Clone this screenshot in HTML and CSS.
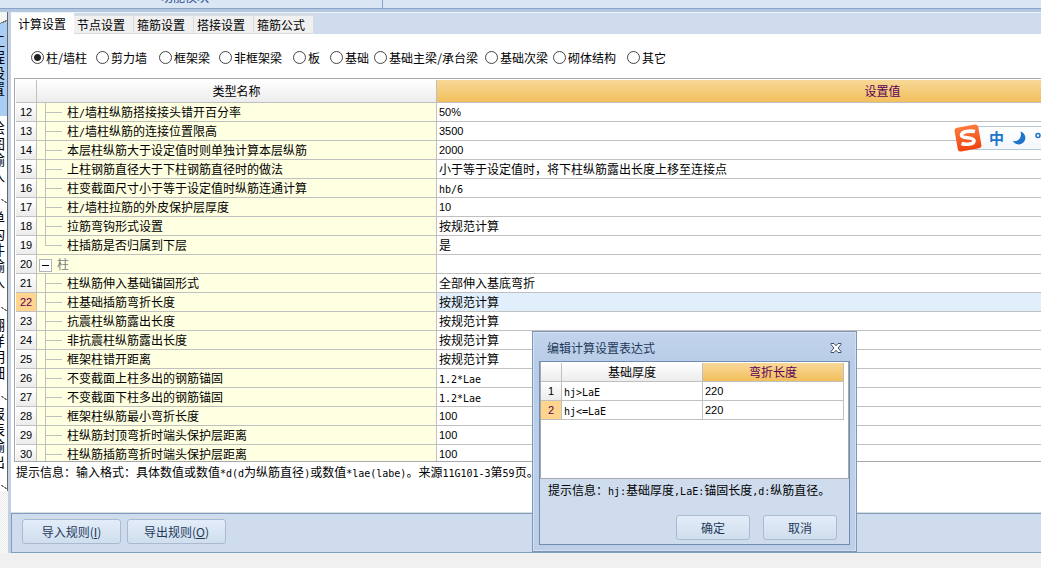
FILE: index.html
```html
<!DOCTYPE html>
<html lang="zh-CN">
<head>
<meta charset="utf-8">
<title>计算设置</title>
<link rel="stylesheet" href="styles.css">
</head>
<body>
<div class="app">
  <header class="ribbon">
    <div class="ribbon-group"><span>功能模块</span></div>
  </header>
  <div class="workspace">
    <nav class="side">
      <button class="side-tab side-active"><span>工程设置</span></button>
      <button class="side-tab"><span>绘图输入</span></button>
      <button class="side-tab side-long"><span>单构件输入</span></button>
      <button class="side-tab"><span>翻样明细</span></button>
      <button class="side-tab"><span>报表输出</span></button>
    </nav>
    <main class="panel">
      <div class="tabs">
        <button class="tab tab-active">计算设置</button>
        <button class="tab">节点设置</button>
        <button class="tab">箍筋设置</button>
        <button class="tab">搭接设置</button>
        <button class="tab">箍筋公式</button>
      </div>
      <div class="kinds">
        <label><input type="radio" name="kind" checked>柱<span class="slash">/</span>墙柱</label>
        <label><input type="radio" name="kind">剪力墙</label>
        <label><input type="radio" name="kind">框架梁</label>
        <label><input type="radio" name="kind">非框架梁</label>
        <label><input type="radio" name="kind">板</label>
        <label><input type="radio" name="kind">基础</label>
        <label><input type="radio" name="kind">基础主梁<span class="slash">/</span>承台梁</label>
        <label><input type="radio" name="kind">基础次梁</label>
        <label><input type="radio" name="kind">砌体结构</label>
        <label><input type="radio" name="kind">其它</label>
      </div>
      <div class="grid-box">
        <table class="grid main-grid">
          <colgroup><col class="c-num"><col class="c-name"><col class="c-value"></colgroup>
          <thead><tr><th></th><th>类型名称</th><th class="picked">设置值</th></tr></thead>
          <tbody>
            <tr><th>12</th><td><i class="twig"></i>柱<span class="code">/</span>墙柱纵筋搭接接头错开百分率</td><td class="num">50%</td></tr>
            <tr><th>13</th><td><i class="twig"></i>柱<span class="code">/</span>墙柱纵筋的连接位置限高</td><td class="num">3500</td></tr>
            <tr><th>14</th><td><i class="twig"></i>本层柱纵筋大于设定值时则单独计算本层纵筋</td><td class="num">2000</td></tr>
            <tr><th>15</th><td><i class="twig"></i>上柱钢筋直径大于下柱钢筋直径时的做法</td><td>小于等于设定值时，将下柱纵筋露出长度上移至连接点</td></tr>
            <tr><th>16</th><td><i class="twig"></i>柱变截面尺寸小于等于设定值时纵筋连通计算</td><td><span class="code">hb/6</span></td></tr>
            <tr><th>17</th><td><i class="twig"></i>柱<span class="code">/</span>墙柱拉筋的外皮保护层厚度</td><td class="num">10</td></tr>
            <tr><th>18</th><td><i class="twig"></i>拉筋弯钩形式设置</td><td>按规范计算</td></tr>
            <tr><th>19</th><td><i class="twig twig-last"></i>柱插筋是否归属到下层</td><td>是</td></tr>
            <tr class="group"><th>20</th><td><button class="fold" aria-label="折叠"></button>柱</td><td></td></tr>
            <tr><th>21</th><td><i class="twig"></i>柱纵筋伸入基础锚固形式</td><td>全部伸入基底弯折</td></tr>
            <tr class="current"><th>22</th><td><i class="twig"></i>柱基础插筋弯折长度</td><td>按规范计算</td></tr>
            <tr><th>23</th><td><i class="twig"></i>抗震柱纵筋露出长度</td><td>按规范计算</td></tr>
            <tr><th>24</th><td><i class="twig"></i>非抗震柱纵筋露出长度</td><td>按规范计算</td></tr>
            <tr><th>25</th><td><i class="twig"></i>框架柱错开距离</td><td>按规范计算</td></tr>
            <tr><th>26</th><td><i class="twig"></i>不变截面上柱多出的钢筋锚固</td><td><span class="code">1.2*Lae</span></td></tr>
            <tr><th>27</th><td><i class="twig"></i>不变截面下柱多出的钢筋锚固</td><td><span class="code">1.2*Lae</span></td></tr>
            <tr><th>28</th><td><i class="twig"></i>框架柱纵筋最小弯折长度</td><td class="num">100</td></tr>
            <tr><th>29</th><td><i class="twig"></i>柱纵筋封顶弯折时端头保护层距离</td><td class="num">100</td></tr>
            <tr><th>30</th><td><i class="twig"></i>柱纵筋插筋弯折时端头保护层距离</td><td class="num">100</td></tr>
          </tbody>
        </table>
      </div>
      <p class="hint">提示信息：输入格式：具体数值或数值<span class="code">*d(d</span>为纵筋直径<span class="code">)</span>或数值<span class="code">*lae(labe)</span>。来源<span class="code">11G101-3</span>第<span class="code">59</span>页。</p>
      <div class="actions">
        <button class="btn btn-wide">导入规则(<u>I</u>)</button>
        <button class="btn btn-wide">导出规则(<u>O</u>)</button>
      </div>
    </main>
  </div>
  <footer class="status"></footer>

  <div class="ime">
    <svg class="ime-logo" viewBox="0 0 30 30" width="30" height="30">
      <defs><linearGradient id="s-fill" x1="0" y1="0" x2="0" y2="1"><stop offset="0" stop-color="#fb7a3c"/><stop offset="1" stop-color="#f0440f"/></linearGradient></defs>
      <rect x="3" y="3" width="24" height="24" rx="3" fill="url(#s-fill)" transform="rotate(-10 15 15)"/>
      <path d="M22 8.500C17 7.500 8.500 8.500 8.500 12.200C8.500 16 21 13.500 21 17.700C21 21.500 13 22 8.500 20.500" fill="none" stroke="#fff" stroke-width="3.600"/>
    </svg>
    <span class="ime-mode">中</span>
    <svg viewBox="0 0 14 14" width="14" height="14"><path d="M8.500 0.500C13 2 14.500 6.500 12.500 10C10 14.500 3.500 14.500 0.500 10C5.500 11.500 10.500 7 8.500 0.500Z" fill="#1e74c8"/></svg>
    <svg viewBox="0 0 8 14" width="8" height="14"><circle cx="4" cy="4.500" r="2" fill="none" stroke="#1e74c8" stroke-width="1.500"/></svg>
  </div>

  <section class="dialog" role="dialog" aria-labelledby="dialog-title">
    <div class="dialog-head">
      <h2 id="dialog-title">编辑计算设置表达式</h2>
      <button class="close" aria-label="关闭">
        <svg viewBox="0 0 12 10" width="12" height="10"><path d="M1 0.500H4L6 2.800L8 0.500H11V1.500L8 5L11 8.500V9.500H8L6 7.200L4 9.500H1V8.500L4 5L1 1.500Z" fill="#fff" stroke="#3c4c66"/></svg>
      </button>
    </div>
    <div class="dialog-body">
      <div class="dialog-list">
        <table class="grid">
          <colgroup><col class="d-num"><col class="d-col"><col class="d-col"></colgroup>
          <thead><tr><th></th><th>基础厚度</th><th class="picked">弯折长度</th></tr></thead>
          <tbody>
            <tr><th>1</th><td><span class="code">hj&gt;LaE</span></td><td class="num">220</td></tr>
            <tr class="current"><th>2</th><td><span class="code">hj&lt;=LaE</span></td><td class="num">220</td></tr>
          </tbody>
        </table>
      </div>
      <p class="dialog-hint">提示信息：<span class="code">hj:</span>基础厚度<span class="code">,LaE:</span>锚固长度<span class="code">,d:</span>纵筋直径。</p>
      <div class="dialog-actions">
        <button class="btn">确定</button>
        <button class="btn">取消</button>
      </div>
    </div>
  </section>
</div>
</body>
</html>
```
FILE: styles.css
```css
* { box-sizing: border-box; }

body {
  margin: 0;
  overflow: hidden;
  color: #000;
  background: #f0f0f0;
  font: 12px/18px "Noto Sans CJK SC", "Liberation Sans", sans-serif;
}

button {
  margin: 0;
  padding: 0;
  border: 0;
  color: inherit;
  font: inherit;
}

p, h2 { margin: 0; font-size: 12px; font-weight: normal; }

.code { font-family: "DejaVu Sans Mono", monospace; font-size: 10px; line-height: 10px; }
.num { font-family: "Liberation Sans", sans-serif; font-size: 11px; }

.app {
  position: relative;
  display: flex;
  flex-direction: column;
  height: 100vh;
}

/* ribbon */
.ribbon {
  flex: none;
  height: 12px;
  overflow: hidden;
  background: #dbe6f4;
  border-bottom: 3px solid #b3c8de;
  box-shadow: inset 0 -1px #8aa3c8;
}
.ribbon-group {
  display: flex;
  align-items: flex-end;
  justify-content: center;
  width: 383px;
  height: 8px;
  padding: 0 12px 3px 0;
  color: #1e4a8a;
  border-right: 1px solid #8aa3c8;
  line-height: 16px;
}

.workspace { flex: 1; display: flex; min-height: 0; }

/* left module tabs */
.side {
  flex: none;
  width: 11px;
  overflow: hidden;
  background: repeating-conic-gradient(#fff 0 25%, #e9e9e9 0 50%) 0 0 / 2px 2px;
  border-right: 3px solid #c3d0e2;
}
.side-tab {
  display: flex;
  justify-content: flex-end;
  align-items: center;
  width: 8px;
  height: 89px;
  padding: 0 2px 20px 0;
  background: linear-gradient(32deg, transparent 5px, #777 5px, #777 6px, transparent 6px) 0 100% / 8px 6px no-repeat, #fff;
  border-right: 1px solid #666;
}
.side-tab span {
  flex: none;
  width: 14px;
  font-size: 14px;
  line-height: 16px;
  white-space: normal;
  word-break: break-all;
}
.side-active {
  height: 104px;
  padding-bottom: 0;
  background: linear-gradient(155deg, #f4f4f4 10px, #777 10px, #777 11px, #a9cdf3 11px);
}
.side-long { height: 108px; }

/* main panel */
.panel {
  flex: 1;
  display: flex;
  flex-direction: column;
  min-width: 0;
  background: #fff;
}
.tabs {
  flex: none;
  display: flex;
  align-items: flex-end;
  height: 22px;
  background: #cfdcee;
  border-top: 1px solid #eef3f9;
}
.tab {
  width: 60px;
  height: 19px;
  padding-right: 5px;
  background: #f0f0f0;
  border: solid #dcdcdc;
  border-width: 1px 1px 1px 0;
  line-height: 18px;
}
.tab-active {
  width: 63px;
  height: 21px;
  padding-right: 0;
  background: #fff;
  border-color: #fff;
}

.kinds {
  flex: none;
  display: grid;
  grid-template-columns: 65px 63px 60px 74px 37px 44px 111px 68px 74px 44px;
  height: 44px;
  padding: 3px 0 0 20px;
}
.kinds label {
  display: flex;
  align-items: center;
  white-space: nowrap;
}
.slash { width: 5px; text-align: center; }
.kinds input {
  appearance: none;
  flex: none;
  width: 13px;
  height: 13px;
  margin: 0 2px 0 0;
  border: 1px solid #444;
  border-radius: 50%;
  background: #fff;
}
.kinds input:checked { background: radial-gradient(circle, #222 3px, #fff 4px); }

/* grids */
.grid-box {
  flex: 1;
  min-height: 0;
  margin-left: 3px;
  padding: 1px;
  overflow: hidden;
  border: solid #a5a9af;
  border-width: 1px 0 1px 1px;
}
.grid { border-spacing: 0; table-layout: fixed; }
.main-grid { width: 1313px; }
.c-num { width: 21px; }
.c-name { width: 400px; }
.grid th, .grid td {
  height: 19px;
  padding: 0;
  border: solid #c0c0c0;
  border-width: 0 1px 1px 0;
  line-height: 18px;
  white-space: nowrap;
}
.grid th {
  background: linear-gradient(#fff, #ececec);
  font-weight: normal;
  text-align: center;
}
.grid tbody th { font-family: "Liberation Sans", sans-serif; font-size: 11px; }
.grid thead .picked {
  color: #5b005b;
  background: linear-gradient(#f8d898, #f1bf5c);
}
.grid tbody .current th { color: #5b005b; background: #ffd48c; }
.grid td { padding-left: 2px; }
.main-grid thead th { height: 23px; }
.main-grid td:nth-child(2) { padding-left: 8px; background: #ffffe1; }
.main-grid .current td:last-child { background: #e1effd; }
.group td { color: #808080; }

.twig {
  display: inline-block;
  width: 22px;
  height: 18px;
  vertical-align: top;
  background:
    linear-gradient(#c0c0c0, #c0c0c0) 0 0 / 1px 18px no-repeat,
    linear-gradient(#c0c0c0, #c0c0c0) 0 9px / 17px 1px no-repeat;
}
.twig-last {
  background:
    linear-gradient(#c0c0c0, #c0c0c0) 0 0 / 1px 9px no-repeat,
    linear-gradient(#c0c0c0, #c0c0c0) 0 9px / 17px 1px no-repeat;
}
.main-grid .group td:nth-child(2) { padding-left: 2px; }
.fold {
  width: 13px;
  height: 13px;
  margin-right: 5px;
  vertical-align: middle;
  background: linear-gradient(#000, #000) center / 7px 1px no-repeat #fff;
  border: 1px solid #b4b4b4;
}

.hint {
  flex: none;
  height: 51px;
  padding-left: 5px;
  border-bottom: 1px solid #dcdcdc;
  line-height: 20px;
  white-space: nowrap;
}

.actions {
  flex: none;
  display: flex;
  gap: 6px;
  height: 40px;
  padding: 5px 10px;
  background: #cfdcee;
  border: 1px solid #7f9cc3;
  border-right: 0;
}
.btn {
  width: 74px;
  height: 25px;
  color: #1e395b;
  background: linear-gradient(#e2edf9, #d0deed);
  border: 1px solid #abbad0;
  border-radius: 3px;
  line-height: 22px;
}
.btn-wide { width: 99px; }

.status { flex: none; height: 15px; background: #f0f0f0; }

/* input method bar floating over the grid */
.ime {
  position: absolute;
  top: 126px;
  right: 0;
  display: flex;
  align-items: center;
  gap: 8px;
  width: 72px;
  height: 24px;
  color: #1e74c8;
  background: linear-gradient(#fff, #f3f8fc);
  border: solid #b5c8d8;
  border-width: 1px 0;
}
.ime > * { flex: none; }
.ime-logo { margin: 0 -2px 0 -16px; }
.ime-mode { width: 15px; font-size: 15px; font-weight: bold; }

/* expression dialog */
.dialog {
  position: absolute;
  top: 331px;
  left: 532px;
  width: 325px;
  padding: 0 6px 6px;
  background: linear-gradient(#c2d4ec, #b9cde8 30px, #bdd0e8);
  border: 1px solid #8196b4;
  box-shadow: inset 0 0 0 1px #d3e0f1;
}
.dialog-head {
  display: flex;
  align-items: center;
  justify-content: space-between;
  height: 29px;
  padding: 3px 8px 0;
  color: #1e395b;
}
.close { display: flex; background: none; }
.dialog-body {
  background: #cfdcee;
  border: 1px solid #6f8db2;
}
.dialog-list {
  height: 117px;
  background: #fff;
  border: solid #a5a9af;
  border-width: 0 1px 1px;
  padding-top: 1px;
}
.dialog-list .grid { width: 303px; }
.d-num { width: 21px; }
.d-col { width: 141px; }
.dialog-hint { padding: 2px 8px 0; line-height: 18px; }
.dialog-actions {
  display: flex;
  justify-content: flex-end;
  gap: 13px;
  padding: 16px 12px 4px;
}
```
